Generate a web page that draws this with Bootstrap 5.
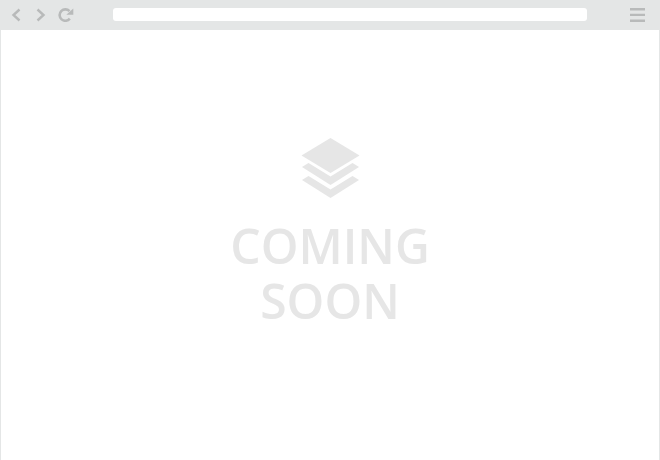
<!DOCTYPE html>
<html lang="en">
<head>
<meta charset="utf-8">
<title>Coming soon</title>
<link rel="stylesheet" href="https://cdn.jsdelivr.net/npm/bootstrap@5.3.0/dist/css/bootstrap.min.css">
<style>
html,body{height:460px;overflow:hidden;background:#fff}
.frame-box{height:460px;border:solid #e4e6e6;border-width:0 1px}
.top-bar{height:29.500px;margin:0 -1px;background:#e4e6e6;padding:0 15px 1px 10px}
.nav-icons{width:103px;gap:12px;margin-top:2px}
.addr{height:13px;width:474px;background:#fff;border-radius:3px}
.burger{margin-top:2px}
.stage{padding-top:108px}
.soon-text{font-family:"Open Sans",sans-serif;font-weight:600;font-size:48px;line-height:55px;color:#e6e6e6;margin-top:20.500px;will-change:transform}
</style>
</head>
<body>
<div class="frame-box d-flex flex-column">
  <div class="top-bar d-flex align-items-center">
    <div class="nav-icons d-flex align-items-center">
      <svg width="12" height="14" viewBox="0 0 12 14"><path d="M9.500 1.500 3.500 7 9.500 12.500" fill="none" stroke="#b8baba" stroke-width="2.400"/></svg>
      <svg width="12" height="14" viewBox="0 0 12 14"><path d="M3.500 1.500 9.500 7 3.500 12.500" fill="none" stroke="#b8baba" stroke-width="2.400"/></svg>
      <svg width="17" height="14" viewBox="0 0 17 14"><path d="M11.800 10.600A5.700 5.700 0 1 1 11.500 3.200" fill="none" stroke="#b8baba" stroke-width="2.600"/><path d="M8.300 6.800H15.300V0.500Z" fill="#b8baba"/></svg>
    </div>
    <div class="addr"></div>
    <svg class="burger ms-auto" width="15" height="14" viewBox="0 0 15 14"><path d="M0 0h15v2.400H0zM0 5.700h15v2.400H0zM0 11.500h15v2.400H0z" fill="#b8baba"/></svg>
  </div>
  <div class="stage flex-grow-1 text-center">
    <svg class="d-block mx-auto" width="60" height="60" viewBox="0 0 60 60"><path d="M30.500 0 59.500 17.500 30.500 35 1.500 17.500Z" fill="#e6e6e6"/><path d="M8.500 25 2 29 30.500 47 59 29 52.500 25 30.500 38.500Z" fill="#e6e6e6"/><path d="M8.500 38 2 42 30.500 60 59 42 52.500 38 30.500 51.500Z" fill="#e6e6e6"/></svg>
    <div class="soon-text">COMING<br>SOON</div>
  </div>
</div>
</body>
</html>
